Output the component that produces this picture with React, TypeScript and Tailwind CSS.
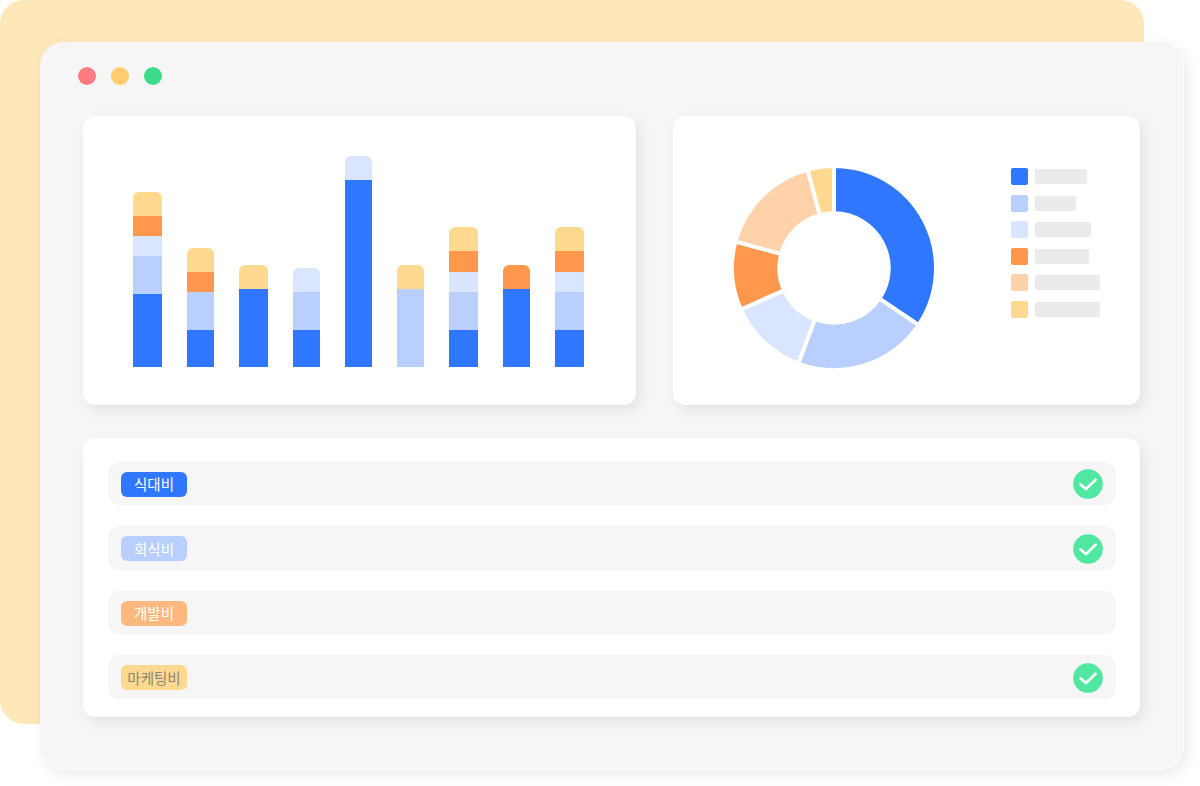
const font = { fontFamily: '"Noto Sans CJK KR", "Noto Sans", sans-serif' };

const bars = [
  { w: "w-[29px]", segs: ["h-[23.5px] bg-[#ffd98f] rounded-t-[6px]", "h-[20.5px] bg-[#ff974d]", "h-[20px] bg-[#dae6ff]", "h-[37.5px] bg-[#b8cfff]", "h-[73.5px] bg-[#3077ff]"] },
  { w: "w-[27px]", segs: ["h-[24px] bg-[#ffd98f] rounded-t-[6px]", "h-[20.5px] bg-[#ff974d]", "h-[37.5px] bg-[#b8cfff]", "h-[37.5px] bg-[#3077ff]"] },
  { w: "w-[29px]", segs: ["h-[23.5px] bg-[#ffd98f] rounded-t-[6px]", "h-[78.5px] bg-[#3077ff]"] },
  { w: "w-[27px]", segs: ["h-[24px] bg-[#dae6ff] rounded-t-[6px]", "h-[37.5px] bg-[#b8cfff]", "h-[37.5px] bg-[#3077ff]"] },
  { w: "w-[27px]", segs: ["h-[23.5px] bg-[#dae6ff] rounded-t-[6px]", "h-[187.5px] bg-[#3077ff]"] },
  { w: "w-[27px]", segs: ["h-[23.5px] bg-[#ffd98f] rounded-t-[6px]", "h-[78.5px] bg-[#b8cfff]"] },
  { w: "w-[29px]", segs: ["h-[24px] bg-[#ffd98f] rounded-t-[6px]", "h-[20.5px] bg-[#ff974d]", "h-[20.5px] bg-[#dae6ff]", "h-[37.5px] bg-[#b8cfff]", "h-[37.5px] bg-[#3077ff]"] },
  { w: "w-[27px]", segs: ["h-[23.5px] bg-[#ff974d] rounded-t-[6px]", "h-[78.5px] bg-[#3077ff]"] },
  { w: "w-[29px]", segs: ["h-[24px] bg-[#ffd98f] rounded-t-[6px]", "h-[20.5px] bg-[#ff974d]", "h-[20.5px] bg-[#dae6ff]", "h-[37.5px] bg-[#b8cfff]", "h-[37.5px] bg-[#3077ff]"] },
];

const slices = [
  { from: 0, to: 124, color: "#3077ff" },
  { from: 124, to: 200.5, color: "#b8cfff" },
  { from: 200.5, to: 246, color: "#dae6ff" },
  { from: 246, to: 285, color: "#ff974d" },
  { from: 285, to: 345, color: "#ffd2aa" },
  { from: 345, to: 360, color: "#ffd98f" },
];

function arc(from: number, to: number) {
  const R = 102;
  const r = 54.7;
  const p = (rad: number, deg: number) => {
    const a = (deg * Math.PI) / 180;
    return `${(rad * Math.sin(a)).toFixed(2)} ${(-rad * Math.cos(a)).toFixed(2)}`;
  };
  const large = to - from > 180 ? 1 : 0;
  return `M${p(R, from)} A${R} ${R} 0 ${large} 1 ${p(R, to)} L${p(r, to)} A${r} ${r} 0 ${large} 0 ${p(r, from)} Z`;
}

const legend = [
  { box: "bg-[#3077ff]", bar: "w-[52px]" },
  { box: "bg-[#b8cfff]", bar: "w-[41px]" },
  { box: "bg-[#dae6ff]", bar: "w-[56px]" },
  { box: "bg-[#ff974d]", bar: "w-[54px]" },
  { box: "bg-[#ffd2aa]", bar: "w-[65px]" },
  { box: "bg-[#ffd98f]", bar: "w-[65px]" },
];

const rows = [
  { label: "식대비", tag: "bg-[#3077ff] text-white", check: true },
  { label: "회식비", tag: "bg-[#b8cfff] text-white", check: true },
  { label: "개발비", tag: "bg-[#ffb97f] text-white", check: false },
  { label: "마케팅비", tag: "bg-[#ffd98f] text-[#8a8874]", check: true },
];

function Check() {
  return (
    <svg viewBox="0 0 30 30" className="w-[30px] h-[30px] shrink-0 mt-[2px]">
      <circle cx="15" cy="15" r="14.8" fill="#50e8a0" />
      <path d="M7.6 15.5 L13 20 L22.6 10.8" fill="none" stroke="#fff" strokeWidth="2.8" strokeLinecap="round" strokeLinejoin="round" />
    </svg>
  );
}

export default function App() {
  return (
    <div className="w-[1200px] h-[786px] bg-white overflow-hidden" style={font}>
      <div className="w-[1144px] h-[724px] rounded-[24px] bg-[#fee7b9] pt-[42px] pl-[40px]">
        <div className="w-[1144px] h-[728px] rounded-[24px] bg-[#f6f6f6] pt-[25px] pl-[38px] shadow-[4px_5px_14px_rgba(0,0,0,0.08),inset_-1px_-1px_0_#fbfbfb]">
          <div className="flex gap-[15px]">
            <div className="w-[18px] h-[18px] rounded-full bg-[#ff7b82]" />
            <div className="w-[18px] h-[18px] rounded-full bg-[#ffcc70]" />
            <div className="w-[18px] h-[18px] rounded-full bg-[#3ddc8b]" />
          </div>

          <div className="ml-[5px] mt-[31px] w-[1057px]">
            <div className="flex gap-[37px]">
              <div className="w-[553px] h-[289px] rounded-[12px] bg-white pl-[50px] pb-[38px] flex items-end gap-[25px] shadow-[4px_5px_14px_rgba(0,0,0,0.08)]">
                {bars.map((b, i) => (
                  <div key={i} className={`${b.w} flex flex-col`}>
                    {b.segs.map((s, j) => (
                      <div key={j} className={s} />
                    ))}
                  </div>
                ))}
              </div>

              <div className="w-[467px] h-[289px] rounded-[12px] bg-white pl-[59px] pt-[50px] flex items-start shadow-[4px_5px_14px_rgba(0,0,0,0.08)]">
                <svg viewBox="-102 -102 204 204" className="w-[204px] h-[204px] shrink-0">
                  {slices.map((s, i) => (
                    <path key={i} d={arc(s.from, s.to)} fill={s.color} stroke="#fff" strokeWidth="4" strokeLinejoin="miter" />
                  ))}
                </svg>
                <div className="ml-[75px] mt-[2px] flex flex-col gap-[9.6px]">
                  {legend.map((l, i) => (
                    <div key={i} className="flex items-center gap-[7px] h-[17px]">
                      <div className={`w-[17px] h-[17px] rounded-[2px] ${l.box}`} />
                      <div className={`h-[15px] rounded-[2px] bg-[#ebebeb] ${l.bar}`} />
                    </div>
                  ))}
                </div>
              </div>
            </div>

            <div className="mt-[33px] h-[279px] rounded-[12px] bg-white pl-[25px] pr-[24px] pt-[23.5px] flex flex-col gap-[21px] shadow-[4px_5px_14px_rgba(0,0,0,0.08)]">
              {rows.map((r) => (
                <div key={r.label} className="h-[43.5px] rounded-[12px] bg-[#f6f6f6] pl-[13px] pr-[13.5px] flex items-center justify-between">
                  <div className={`w-[66px] h-[25px] mt-[2px] rounded-[6px] flex items-center justify-center text-[14.5px] leading-none ${r.tag}`}>
                    {r.label}
                  </div>
                  {r.check && <Check />}
                </div>
              ))}
            </div>
          </div>
        </div>
      </div>
    </div>
  );
}
